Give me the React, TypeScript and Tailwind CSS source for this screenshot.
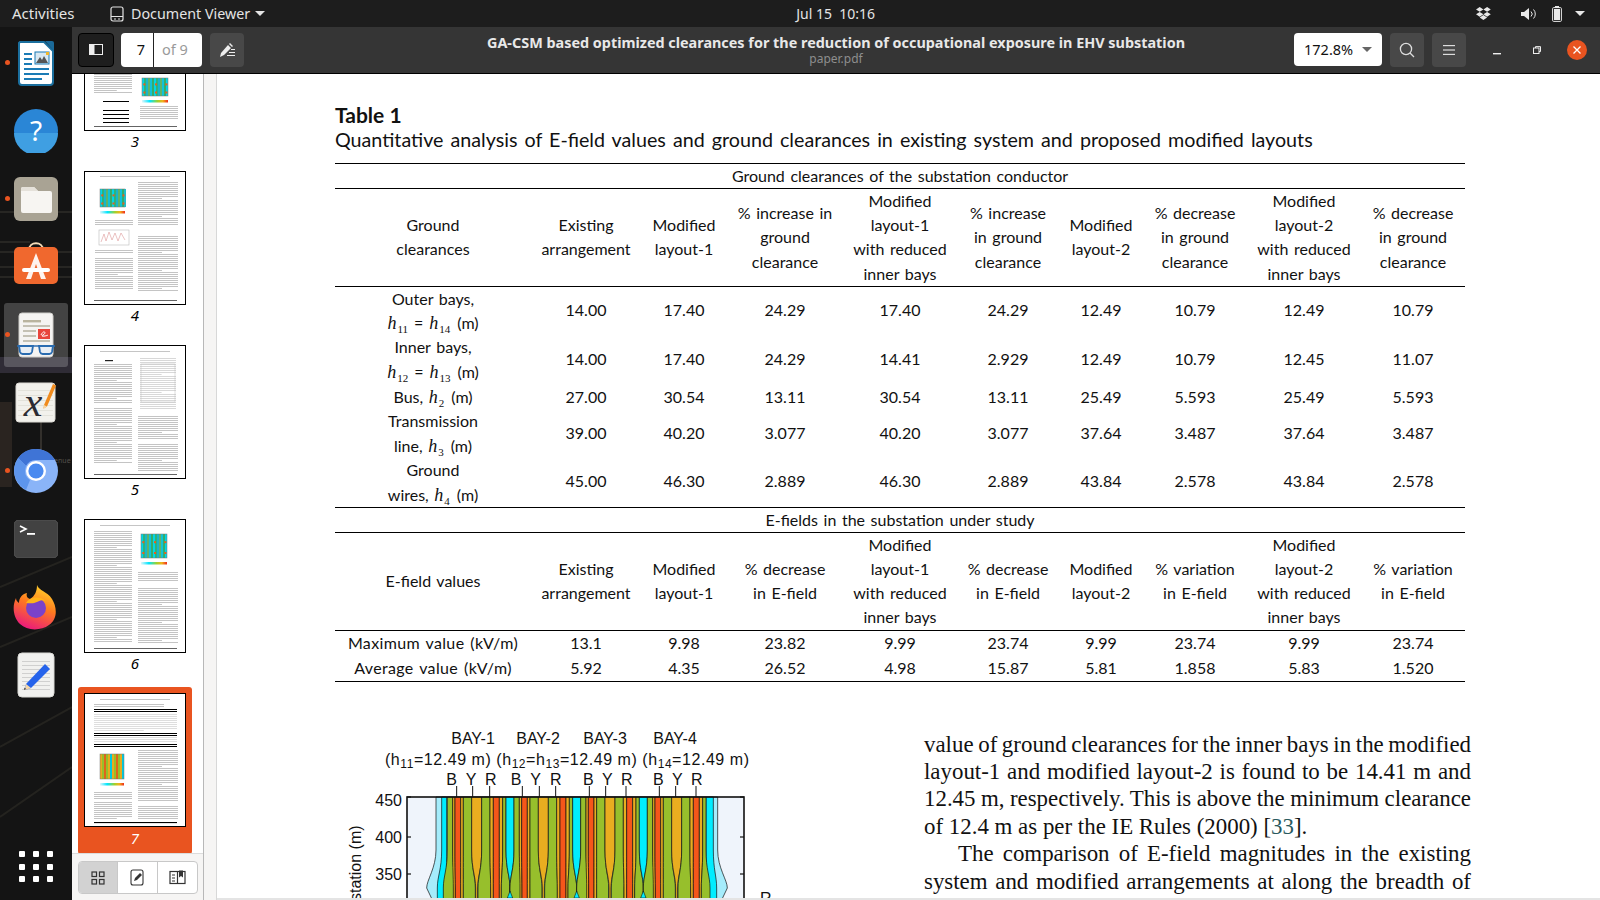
import React from "react";

const SANS = "font-['Noto_Sans','Open_Sans',sans-serif]";

/* ---------- Dock icons ---------- */
const WriterIcon = () => (
  <svg width="38" height="46" viewBox="0 0 38 46">
    <path d="M3 2h24l9 9v31a3 3 0 0 1-3 3H5a3 3 0 0 1-3-3V3z" fill="#fff" stroke="#1b6f9e" strokeWidth="2" />
    <path d="M28 1h7a2 2 0 0 1 2 2v8z" fill="#1b6a99" />
    <rect x="7" y="13" width="8" height="2" fill="#1b7bb5" />
    <rect x="7" y="18" width="8" height="2" fill="#1b7bb5" />
    <rect x="7" y="23" width="8" height="2" fill="#1b7bb5" />
    <rect x="18" y="12" width="14" height="12" fill="#d8e8f2" stroke="#1b7bb5" strokeWidth="1" />
    <path d="M19 23l4-6 2 3 2-4 4 7z" fill="#555" />
    <rect x="29" y="12" width="3" height="3" fill="#f1b72b" />
    <rect x="7" y="28" width="25" height="2" fill="#1b7bb5" />
    <rect x="7" y="33" width="25" height="2" fill="#1b7bb5" />
    <rect x="7" y="38" width="18" height="2" fill="#1b7bb5" />
  </svg>
);
const HelpIcon = () => (
  <svg width="44" height="44" viewBox="0 0 44 44">
    <circle cx="22" cy="22" r="22" fill="#2a86d6" />
    <path d="M0 24h44a22 22 0 0 1-44 0z" fill="#3f9fe2" />
    <text x="22" y="32" textAnchor="middle" fontSize="28" fill="#fff" fontFamily="Noto Sans, sans-serif">?</text>
  </svg>
);
const FilesIcon = () => (
  <svg width="44" height="44" viewBox="0 0 44 44">
    <rect width="44" height="44" rx="6" fill="#a9a394" />
    <path d="M7 12a2 2 0 0 1 2-2h11l4 4h12a2 2 0 0 1 2 2v18a2 2 0 0 1-2 2H9a2 2 0 0 1-2-2z" fill="#f7f5f2" />
    <path d="M7 12a2 2 0 0 1 2-2h11l4 4H7z" fill="#e5e1da" />
  </svg>
);
const StoreIcon = () => (
  <svg className="-translate-y-[3px]" width="44" height="44" viewBox="0 0 44 44">
    <path d="M15 8c0-9 14-9 14 0" fill="none" stroke="#f6dcb8" strokeWidth="2" />
    <rect y="5" width="44" height="37" rx="5" fill="#f0682e" />
    <path d="M22 11l-10 26h5l5-15 5 15h5z" fill="#fff" opacity="0.92" />
    <rect x="8" y="26" width="28" height="4" rx="2" fill="#fff" />
  </svg>
);
const EvinceIcon = () => (
  <svg width="40" height="46" viewBox="0 0 40 46">
    <rect x="3" y="1" width="34" height="44" rx="3" fill="#f5f4f2" stroke="#d0cfcb" />
    <rect x="7" y="8" width="18" height="2.4" fill="#b9b49f" />
    <rect x="7" y="13" width="27" height="2" fill="#c4c1b4" />
    <rect x="7" y="18" width="13" height="2" fill="#c4c1b4" />
    <rect x="7" y="23" width="13" height="2" fill="#c4c1b4" />
    <rect x="7" y="28" width="27" height="2" fill="#c4c1b4" />
    <rect x="22" y="17" width="12" height="10" fill="#e8453c" />
    <path d="M25 23c3-6 6-2 2 0s4 1 5 0" stroke="#fff" fill="none" strokeWidth="1" />
    <path d="M1 34h38" stroke="#2a6cb0" strokeWidth="1.6" />
    <path d="M3 34h14l-1 6a3 3 0 0 1-3 2H7a3 3 0 0 1-3-2z" fill="#e9eff5" stroke="#2a6cb0" strokeWidth="1.8" />
    <path d="M23 34h14l-1 6a3 3 0 0 1-3 2h-6a3 3 0 0 1-3-2z" fill="#e9eff5" stroke="#2a6cb0" strokeWidth="1.8" />
  </svg>
);
const XedIcon = () => (
  <svg className="overflow-visible" width="42" height="42" viewBox="0 0 42 42">
    <rect x="1" y="1" width="39" height="39" rx="3" fill="#f2f1ec" stroke="#dcdad4" />
    {[8, 13, 18, 23, 28, 33].map((y) => (
      <rect key={y} x="3" y={y} width="35" height="0.7" fill="#dddbd3" />
    ))}
    <text x="18" y="34" textAnchor="middle" fontSize="42" fontStyle="italic" fill="#2b2b33" fontFamily="Liberation Serif, serif">x</text>
    <path d="M29 23L38 2l3 1.5-9 21-3.5 2z" fill="#f08b1d" />
    <path d="M29 23l-.5 4 3.5-2.5z" fill="#f5d6a5" />
  </svg>
);
const ChromiumIcon = () => (
  <svg width="44" height="44" viewBox="0 0 44 44">
    <circle cx="22" cy="22" r="22" fill="#8ab4f8" />
    <path d="M22 0a22 22 0 0 1 19 11H22a11 11 0 0 0-10 6L4 9A22 22 0 0 1 22 0z" fill="#3f74d6" />
    <path d="M4 9l8 8-1 4a11 11 0 0 0 5 10L12 41A22 22 0 0 1 4 9z" fill="#5d95ec" />
    <circle cx="22" cy="22" r="10" fill="#fff" />
    <circle cx="22" cy="22" r="7.6" fill="#4a8af0" />
  </svg>
);
const TerminalIcon = () => (
  <svg width="44" height="38" viewBox="0 0 44 38">
    <rect width="44" height="38" rx="5" fill="#424242" stroke="#555" />
    <path d="M6 6l6 3-6 3" fill="none" stroke="#fff" strokeWidth="1.6" />
    <rect x="13" y="13" width="8" height="1.8" fill="#fff" />
  </svg>
);
const FirefoxIcon = () => (
  <svg width="46" height="48" viewBox="0 0 46 48">
    <defs>
      <linearGradient id="ff" x1="0.7" y1="0" x2="0.3" y2="1">
        <stop offset="0" stopColor="#ffd42a" />
        <stop offset="0.45" stopColor="#ff7a1f" />
        <stop offset="1" stopColor="#e9167f" />
      </linearGradient>
    </defs>
    <path d="M24 2c2 6 10 6 15 14 5 8 6 20-3 26-8 6-22 6-29-1C0 34-1 23 3 15c0 3 2 4 3 5 0-5 3-9 8-10-1 3 0 5 3 6 5-3 7-8 7-14z" fill="url(#ff)" />
    <circle cx="23" cy="25" r="10" fill="#7b42c9" />
    <path d="M13 20c3-6 13-8 20-2-5-2-7 0-9 1-4 2-7 1-11 1z" fill="#ffb31a" />
  </svg>
);
const NoteIcon = () => (
  <svg width="38" height="46" viewBox="0 0 38 46">
    <rect x="1" y="1" width="36" height="44" rx="4" fill="#f1f1ef" stroke="#dadad6" />
    {[9, 13, 17, 21, 25, 29, 33, 37].map((y) => (
      <rect key={y} x="5" y={y} width="28" height="0.8" fill="#c9c9c7" />
    ))}
    <path d="M9 32L28 12l5 5-19 19-6 2z" fill="#2563eb" />
    <path d="M9 32l5 4-6 2z" fill="#f5d7a8" />
    <path d="M7.5 35.5l1.5 1.5-2 1z" fill="#333" />
  </svg>
);

const DockItem = ({ dot, active, children }: { dot?: boolean; active?: boolean; children: React.ReactNode }) => (
  <div className="relative flex h-[68px] w-[72px] items-center justify-center">
    {active && <div className="absolute left-[4px] top-[2px] h-[64px] w-[64px] rounded-[3px] bg-white/20" />}
    {dot && <div className="absolute left-[5px] top-[31px] h-[5px] w-[5px] rounded-full bg-[#e95420]" />}
    <div className="relative flex">{children}</div>
  </div>
);

const Dock = () => (
  <div className="relative flex w-[72px] flex-col overflow-hidden bg-[#141414] pt-[2px]">
    <svg className="absolute left-0 top-0" width="72" height="873" viewBox="0 0 72 873">
      <path d="M0 185h72M0 225h72M0 240h72M0 250h72M0 215h30" stroke="#2e2c28" strokeWidth="1.5" />
      <rect x="0" y="330" width="72" height="16" fill="#4a4458" opacity="0.5" />
      <rect x="0" y="375" width="12" height="85" fill="#2a2420" />
      <rect x="40" y="360" width="2" height="90" fill="#33302c" />
      <text x="46" y="436" fontSize="7" fill="#55524c" fontFamily="Noto Sans, sans-serif">Avenue</text>
      <path d="M0 560L72 530M0 620L72 590M0 720L72 680M0 790L72 740" stroke="#24231f" strokeWidth="2" />
    </svg>
    <DockItem dot><WriterIcon /></DockItem>
    <DockItem><HelpIcon /></DockItem>
    <DockItem dot><FilesIcon /></DockItem>
    <DockItem><StoreIcon /></DockItem>
    <DockItem dot active><EvinceIcon /></DockItem>
    <DockItem><XedIcon /></DockItem>
    <DockItem dot><ChromiumIcon /></DockItem>
    <DockItem><TerminalIcon /></DockItem>
    <DockItem><FirefoxIcon /></DockItem>
    <DockItem><NoteIcon /></DockItem>
    <div className="relative mt-auto mb-[18px] grid w-[72px] grid-cols-3 justify-items-center gap-y-[6.5px] px-[15px]">
      {Array.from({ length: 9 }).map((_, i) => (
        <div key={i} className="h-[6px] w-[6px] rounded-[1px] bg-white" />
      ))}
    </div>
  </div>
);

/* ---------- Thumbnails ---------- */
const Lines = ({ x, y, w, n, gap = 2, c = "#666" }: { x: number; y: number; w: number; n: number; gap?: number; c?: string }) => (
  <g fill={c} opacity="0.42">
    {Array.from({ length: n }).map((_, i) => (
      <rect key={i} x={x} y={y + i * gap} width={i % 9 === 8 ? w * 0.6 : w} height="0.9" />
    ))}
  </g>
);
const Heat = ({ x, y, w, h, mixed }: { x: number; y: number; w: number; h: number; mixed?: boolean }) => {
  const colors = mixed ? ["#e8ab1e", "#96bf2b", "#e0641c", "#96bf2b", "#e8ab1e", "#00c9e0"] : ["#00d5e8", "#2cb37d", "#19b5c9", "#5db36a", "#10c2d8", "#34ad6a"];
  const n = Math.round(w / 2);
  return (
    <g>
      {Array.from({ length: n }).map((_, i) => (
        <rect key={i} x={x + i * 2} y={y} width="2" height={h} fill={colors[i % colors.length]} />
      ))}
      {!mixed && [y + h * 0.3, y + h * 0.75].map((yy, k) =>
        [0.05, 0.5, 0.9].map((f) => <rect key={k + "" + f} x={x + w * f} y={yy} width="2" height="2" fill="#ee5a1a" />)
      )}
      <rect x={x} y={y} width={w} height={h} fill="none" stroke="#777" strokeWidth="0.5" />
      <defs>
        <linearGradient id="cb">
          <stop offset="0" stopColor="#dff7fb" />
          <stop offset="0.3" stopColor="#00e5ff" />
          <stop offset="0.6" stopColor="#9fd12b" />
          <stop offset="0.8" stopColor="#f2b21c" />
          <stop offset="1" stopColor="#ef2b1c" />
        </linearGradient>
      </defs>
      <rect x={x} y={y + h + 4} width={w} height="2.5" fill="url(#cb)" />
    </g>
  );
};

const pageFrame = (children: React.ReactNode) => (
  <svg className="block h-[134px] w-[102px] shrink-0 border border-black bg-white" viewBox="0 0 100 132" preserveAspectRatio="none">
    {children}
  </svg>
);

const P3 = () => pageFrame(
  <>
    <Lines x={9} y={4} w={38} n={46} />
    <Lines x={52} y={4} w={40} n={36} />
    <Heat x={57} y={80} w={26} h={18} />
    <Lines x={55} y={108} w={38} n={7} />
    {[103, 112, 116, 120, 124].map((y) => <rect key={y} x={18} y={y} width="26" height="1" fill="#000" />)}
    <rect x={9} y={128} width="83" height="0.7" fill="#222" />
  </>
);
const P4 = () => pageFrame(
  <>
    <Lines x={15} y={4} w={70} n={1} />
    <Heat x={15} y={17} w={25} h={18} />
    <Lines x={10} y={48} w={38} n={3} />
    <rect x={14} y={58} width="30" height="15" fill="none" stroke="#bbb" strokeWidth="0.6" />
    <path d="M16 70l3-8 2 7 3-9 3 8 3-7 3 8 3-8 4 7" fill="none" stroke="#d99" strokeWidth="0.6" />
    <Lines x={10} y={78} w={38} n={2} />
    <Lines x={10} y={86} w={38} n={16} />
    <Lines x={53} y={10} w={40} n={22} />
    <Lines x={53} y={64} w={40} n={28} />
    <rect x={9} y={128} width="83" height="0.7" fill="#222" />
  </>
);
const P5 = () => pageFrame(
  <>
    <Lines x={15} y={5} w={70} n={1} />
    <rect x={20} y={14} width="8" height="1.2" fill="#222" />
    <Lines x={9} y={18} w={38} n={20} />
    <Lines x={9} y={62} w={38} n={28} />
    <Lines x={55} y={12} w={36} n={26} c="#999" />
    <rect x={56} y={18} width="34" height="38" fill="none" stroke="#bbb" strokeWidth="0.5" />
    <Lines x={53} y={70} w={40} n={12} />
    <Lines x={53} y={98} w={40} n={14} />
    <rect x={9} y={128} width="83" height="0.7" fill="#222" />
  </>
);
const P6 = () => pageFrame(
  <>
    <Lines x={15} y={5} w={70} n={1} />
    <Lines x={9} y={11} w={38} n={56} />
    <Heat x={56} y={14} w={26} h={24} />
    <Lines x={53} y={52} w={40} n={5} />
    <Lines x={53} y={68} w={40} n={28} />
    <rect x={9} y={128} width="83" height="0.7" fill="#222" />
  </>
);
const P7 = () => pageFrame(
  <>
    <Lines x={15} y={5} w={70} n={1} />
    <Lines x={9} y={10} w={70} n={2} />
    {[15, 17, 39, 41, 50, 52].map((y) => <rect key={y} x={9} y={y} width="83" height="1" fill="#000" />)}
    <Lines x={9} y={20} w={83} n={9} c="#aaa" />
    <Lines x={9} y={43} w={83} n={3} c="#aaa" />
    <Heat x={15} y={60} w={24} h={25} mixed />
    <Lines x={9} y={98} w={38} n={4} />
    <Lines x={9} y={108} w={38} n={9} />
    <Lines x={53} y={56} w={40} n={26} />
    <Lines x={53} y={112} w={40} n={7} />
    <rect x={9} y={128} width="83" height="1.1" fill="#000" />
  </>
);

const ThumbLabel = ({ n, white }: { n: number; white?: boolean }) => (
  <div className={`mt-[3px] flex h-[14px] items-center justify-center text-[15px] italic ${SANS} ${white ? "text-white" : "text-black"}`}>{n}</div>
);

const Thumbs = () => (
  <div className="flex-1 overflow-hidden bg-white">
    <div className="-mt-[77px] ml-[6px] flex w-[114px] flex-col items-center">
      <div className="flex h-[174px] w-[102px] flex-col"><P3 /><ThumbLabel n={3} /></div>
      <div className="flex h-[174px] w-[102px] flex-col"><P4 /><ThumbLabel n={4} /></div>
      <div className="flex h-[174px] w-[102px] flex-col"><P5 /><ThumbLabel n={5} /></div>
      <div className="flex h-[168px] w-[102px] flex-col"><P6 /><ThumbLabel n={6} /></div>
      <div className="flex h-[167px] w-[114px] flex-col items-center rounded-[3px] bg-[#e95420] pt-[6px]">
        <P7 />
        <div className="mt-[1px]"><ThumbLabel n={7} white /></div>
      </div>
    </div>
  </div>
);

const SideTabs = () => (
  <div className="flex h-[47px] items-start border-t border-[#dcdcdc] bg-[#f6f5f4] pl-[6px] pt-[7px]">
    <div className="flex h-[33px] w-[120px] overflow-hidden rounded-[4px] border border-[#c8c8c8] bg-white">
      <div className="flex w-[40px] items-center justify-center border-r border-[#c8c8c8] bg-[#d2d2d2]">
        <svg width="14" height="14" viewBox="0 0 14 14" fill="none" stroke="#333" strokeWidth="1.2">
          <rect x="1" y="1" width="4.5" height="4.5" /><rect x="8.5" y="1" width="4.5" height="4.5" />
          <rect x="1" y="8.5" width="4.5" height="4.5" /><rect x="8.5" y="8.5" width="4.5" height="4.5" />
        </svg>
      </div>
      <div className="flex w-[40px] items-center justify-center border-r border-[#c8c8c8]">
        <svg width="15" height="17" viewBox="0 0 15 17">
          <rect x="1" y="1" width="12" height="15" rx="2" fill="none" stroke="#333" strokeWidth="1.1" />
          <path d="M4 12l1-3 5-5 2 2-5 5z" fill="#333" />
        </svg>
      </div>
      <div className="flex w-[40px] items-center justify-center">
        <svg width="17" height="15" viewBox="0 0 17 15" fill="none" stroke="#333" strokeWidth="1.2">
          <rect x="1" y="1.5" width="15" height="12" />
          <path d="M8.5 1.5v12M3 5h3M3 8h3M3 11h3" />
          <path d="M10 .5h4v7l-2-1.5-2 1.5z" fill="#333" stroke="none" />
        </svg>
      </div>
    </div>
  </div>
);

/* ---------- Table ---------- */
const H = ({ n }: { n: string | number }) => (
  <span className="whitespace-nowrap leading-[0]">
    <i className="font-['Liberation_Serif',serif] text-[18px] leading-[0]">h</i>
    <span className="relative top-[4px] ml-[1px] font-['Liberation_Serif',serif] text-[11px] leading-[0]">{n}</span>
  </span>
);
const Eq = () => <span className="mx-[6px]">=</span>;
const Unit = () => <span className="ml-[7px]">(m)</span>;
const br = (...parts: React.ReactNode[]) =>
  parts.map((p, i) => (
    <React.Fragment key={i}>
      {i > 0 && <br />}
      {p}
    </React.Fragment>
  ));

const head1: React.ReactNode[] = [
  br("Ground", "clearances"),
  br("Existing", "arrangement"),
  br("Modified", "layout-1"),
  br("% increase in", "ground", "clearance"),
  br("Modified", "layout-1", "with reduced", "inner bays"),
  br("% increase", "in ground", "clearance"),
  br("Modified", "layout-2"),
  br("% decrease", "in ground", "clearance"),
  br("Modified", "layout-2", "with reduced", "inner bays"),
  br("% decrease", "in ground", "clearance"),
];
const head2: React.ReactNode[] = [
  "E-field values",
  br("Existing", "arrangement"),
  br("Modified", "layout-1"),
  br("% decrease", "in E-field"),
  br("Modified", "layout-1", "with reduced", "inner bays"),
  br("% decrease", "in E-field"),
  br("Modified", "layout-2"),
  br("% variation", "in E-field"),
  br("Modified", "layout-2", "with reduced", "inner bays"),
  br("% variation", "in E-field"),
];
const rows1: { h: string; two: boolean; c: React.ReactNode[] }[] = [
  { h: "h-[49px]", two: true, c: [br("Outer bays,", <><H n={11} /><Eq /><H n={14} /><Unit /></>), "14.00", "17.40", "24.29", "17.40", "24.29", "12.49", "10.79", "12.49", "10.79"] },
  { h: "h-[49px]", two: true, c: [br("Inner bays,", <><H n={12} /><Eq /><H n={13} /><Unit /></>), "14.00", "17.40", "24.29", "14.41", "2.929", "12.49", "10.79", "12.45", "11.07"] },
  { h: "h-[25px]", two: false, c: [<>Bus, <H n={2} /><Unit /></>, "27.00", "30.54", "13.11", "30.54", "13.11", "25.49", "5.593", "25.49", "5.593"] },
  { h: "h-[49px]", two: true, c: [br("Transmission", <>line, <H n={3} /><Unit /></>), "39.00", "40.20", "3.077", "40.20", "3.077", "37.64", "3.487", "37.64", "3.487"] },
  { h: "h-[49px]", two: true, c: [br("Ground", <>wires, <H n={4} /><Unit /></>), "45.00", "46.30", "2.889", "46.30", "2.889", "43.84", "2.578", "43.84", "2.578"] },
];
const rows2: { h: string; c: React.ReactNode[] }[] = [
  { h: "h-[25px]", c: [<span className="tracking-[0.35px]">Maximum value (kV/m)</span>, "13.1", "9.98", "23.82", "9.99", "23.74", "9.99", "23.74", "9.99", "23.74"] },
  { h: "h-[26px]", c: [<span className="tracking-[0.35px]">Average value (kV/m)</span>, "5.92", "4.35", "26.52", "4.98", "15.87", "5.81", "1.858", "5.83", "1.520"] },
];
const widths = ["w-[196px]", "w-[110px]", "w-[86px]", "w-[116px]", "w-[114px]", "w-[102px]", "w-[84px]", "w-[104px]", "w-[114px]", "w-[104px]"];

const Row = ({ cells, cls, two }: { cells: React.ReactNode[]; cls: string; two?: boolean }) => (
  <tr className={cls}>
    {cells.map((c, i) => (
      <td key={i} className={two ? (i === 0 ? "p-0 text-center align-top" : "p-0 pb-[2px] text-center align-middle") : "p-0 text-center align-middle"}>{c}</td>
    ))}
  </tr>
);

const DataTable = () => (
  <table className="w-[1130px] table-fixed border-collapse border-y border-black text-[16px] leading-[24.2px] text-[#111] [word-spacing:1.5px]">
    <colgroup>{widths.map((w, i) => <col key={i} className={w} />)}</colgroup>
    <tbody>
      <tr className="h-[24px] border-b border-black"><td colSpan={10} className="p-0 pb-[1px] text-center leading-[23px]">Ground clearances of the substation conductor</td></tr>
      <Row cells={head1} cls="h-[97px] border-b border-black" />
      {rows1.map((r, i) => <Row key={i} cells={r.c} cls={r.h} two={r.two} />)}
      <tr className="h-[24px] border-y border-black"><td colSpan={10} className="p-0 pb-[1px] text-center leading-[23px]">E-fields in the substation under study</td></tr>
      <Row cells={head2} cls="h-[97px] border-b border-black" />
      {rows2.map((r, i) => <Row key={i} cells={r.c} cls={r.h} />)}
    </tbody>
  </table>
);

/* ---------- Contour figure ---------- */
const RED = "#f5561a", AMB = "#e9ad20", GRN = "#97bf2c", CYA = "#00edff", LCY = "#a5ecfb";
const X = (z: number) => 330 + z / 3;
// l, r at the top, l2, r2 where the field pinches
const pattern: [number, number, number, number, string][] = [
  [-12, 12, 0, 0, CYA],
  [12, 28, 0, 36, GRN],
  [28, 35, 30, 36, AMB],
  [35, 52, 36, 52, RED],
  [52, 60, 52, 60, AMB],
  [60, 85, 60, 96, GRN],
  [85, 115, 97, 103, AMB],
  [115, 140, 104, 142, GRN],
  [140, 150, 142, 150, AMB],
  [150, 168, 150, 168, RED],
  [168, 178, 168, 174, AMB],
  [178, 188, 174, 200, GRN],
];
const stripe = (l: number, r: number, l2: number, r2: number) =>
  `M${X(l)} 797 L${X(l)} 850 C${X(l)} 870 ${X(l2)} 876 ${X(l2)} 888 L${X(l2)} 902 L${X(r2)} 902 L${X(r2)} 888 C${X(r2)} 876 ${X(r)} 870 ${X(r)} 850 L${X(r)} 797 Z`;

const Figure = () => {
  const cs = [340, 540, 740, 940, 1140];
  const bays = [["BAY-1", 473], ["BAY-2", 538], ["BAY-3", 605], ["BAY-4", 675]] as const;
  const phases = [[380, 365, "B"], [428, 423, "Y"], [479, 482, "R"], [577, 558, "B"], [628, 617, "Y"], [677, 677, "R"], [778, 775, "B"], [827, 832, "Y"], [888, 890, "R"], [988, 985, "B"], [1037, 1042, "Y"], [1098, 1100, "R"]] as const;
  const font = "Liberation Sans, Arial, sans-serif";
  return (
    <svg className="block shrink-0" width="480" height="190" viewBox="335 720 480 190" fontFamily={font}>
      <rect x="407" y="797" width="337" height="110" fill="#eff4fb" />
      <path d={`M${X(318)} 797 L${X(318)} 850 C${X(318)} 868 ${X(290)} 880 ${X(290)} 888 L${X(310)} 902 L${X(1172)} 902 L${X(1192)} 888 C${X(1192)} 880 ${X(1163)} 868 ${X(1163)} 850 L${X(1163)} 797 Z`} fill={LCY} stroke="#111" strokeWidth="0.7" />
      <path d={stripe(335, 350, 322, 352)} fill={CYA} stroke="#111" strokeWidth="0.7" />
      <path d={stripe(1128, 1150, 1128, 1160)} fill={CYA} stroke="#111" strokeWidth="0.7" />
      {cs.slice(0, 4).map((c, bi) =>
        pattern.map(([l, r, l2, r2, col], i) =>
          bi === 0 && i === 0 ? null : <path key={bi + "-" + i} d={stripe(c + l, c + r, c + l2, c + r2)} fill={col} stroke="#111" strokeWidth="0.7" />
        )
      )}
      {[540, 740, 940].map((c) => (
        <path key={c} d={`M${X(c - 8)} 898 L${X(c)} 891 L${X(c + 8)} 898 Z`} fill={CYA} stroke="#111" strokeWidth="0.6" />
      ))}
      <rect x="407" y="797" width="337" height="110" fill="none" stroke="#111" strokeWidth="1.6" />
      {[797, 837, 874].map((y) => (
        <g key={y} stroke="#111" strokeWidth="1.2">
          <line x1="407" y1={y} x2="411" y2={y} />
          <line x1="744" y1={y} x2="740" y2={y} />
        </g>
      ))}
      {phases.map(([t, z, p]) => (
        <g key={t}>
          <line x1={X(t)} y1="786" x2={X(t)} y2="797" stroke="#111" strokeWidth="1" />
          <text x={X(z)} y="785" textAnchor="middle" fontSize="16" fill="#111">{p}</text>
        </g>
      ))}
      {bays.map(([t, x]) => (
        <text key={t} x={x} y="744" textAnchor="middle" fontSize="16" fill="#111">{t}</text>
      ))}
      <text x="385" y="765" fontSize="16" fill="#111" textLength="364">
        (h<tspan fontSize="12" dy="3">11</tspan><tspan dy="-3">=12.49 m) (h</tspan><tspan fontSize="12" dy="3">12</tspan><tspan dy="-3">=h</tspan><tspan fontSize="12" dy="3">13</tspan><tspan dy="-3">=12.49 m) (h</tspan><tspan fontSize="12" dy="3">14</tspan><tspan dy="-3">=12.49 m)</tspan>
      </text>
      {[[450, 805.5], [400, 843], [350, 880]].map(([t, y]) => (
        <text key={t} x="402" y={y} textAnchor="end" fontSize="16" fill="#111">{t}</text>
      ))}
      <text transform="translate(361 901) rotate(-90)" fontSize="16" fill="#111">station (m)</text>
      <text x="760" y="904" fontSize="16" fill="#111">R</text>
    </svg>
  );
};

/* ---------- Body text ---------- */
const J = ({ children, last, indent, cls = "" }: { children: React.ReactNode; last?: boolean; indent?: boolean; cls?: string }) => (
  <div className={`h-[27.4px] ${last ? "whitespace-nowrap" : "whitespace-normal text-justify [text-align-last:justify]"} ${indent ? "indent-[34px]" : ""} ${cls}`}>{children}</div>
);

const BodyText = () => (
  <div className="ml-[109px] mt-[11px] w-[547px] shrink-0 font-['Liberation_Serif',serif] text-[22.9px] leading-[27.4px] text-[#111]">
    <J cls="[word-spacing:-2px]">value of ground clearances for the inner bays in the modified</J>
    <J cls="[word-spacing:-2px]">layout-1 and modified layout-2 is found to be 14.41 m and</J>
    <J cls="[word-spacing:-2px]">12.45 m, respectively. This is above the minimum clearance</J>
    <J last>of 12.4 m as per the IE Rules (2000) [<span className="text-[#2a5a5e]">33</span>].</J>
    <J indent cls="[word-spacing:-2px]">The comparison of E-field magnitudes in the existing</J>
    <J cls="[word-spacing:-2px]">system and modified arrangements at along the breadth of</J>
  </div>
);

/* ---------- Chrome ---------- */
const HeadBtn = ({ children, cls = "" }: { children: React.ReactNode; cls?: string }) => (
  <div className={`flex h-[34px] w-[34px] items-center justify-center rounded-[4px] bg-[#484848] ${cls}`}>{children}</div>
);

const TopBar = () => (
  <div className={`flex h-[27px] items-center bg-[#1d1d1d] text-[14.5px] text-[#e4e4e4] ${SANS}`}>
    <span className="ml-[12px] w-[98px] text-[15px]">Activities</span>
    <svg width="14" height="16" viewBox="0 0 14 16" fill="none" stroke="#e4e4e4" strokeWidth="1.2">
      <rect x="1" y="1" width="12" height="14" rx="2" />
      <path d="M1 10.5h12M4 13h2M8 13h2" />
    </svg>
    <span className="ml-[7px] text-[14.3px]">Document Viewer</span>
    <svg className="ml-[5px]" width="10" height="5" viewBox="0 0 10 5"><path d="M0 0h10L5 5z" fill="#e4e4e4" /></svg>
    <span className="ml-[531px] text-[14px]">Jul 15&nbsp; 10:16</span>
    <div className="ml-auto flex items-center">
      <svg width="15" height="13" viewBox="0 0 15 13" fill="#e8e8e8">
        <path d="M3.7 0L7.4 2.4 3.7 4.8 0 2.4zM11.1 0l3.7 2.4-3.7 2.4-3.7-2.4zM3.7 4.9l3.7 2.4-3.7 2.4L0 7.3zM11.1 4.9l3.7 2.4-3.7 2.4-3.7-2.4zM7.4 8l3.7 2.4L7.4 13l-3.7-2.6z" />
      </svg>
      <svg className="ml-[30px]" width="16" height="14" viewBox="0 0 16 14" fill="none">
        <path d="M0 5h3l5-4v12l-5-4H0z" fill="#e8e8e8" />
        <path d="M10 4.5a3.5 3.5 0 0 1 0 5M12.5 2.5a6.5 6.5 0 0 1 0 9" stroke="#e8e8e8" strokeWidth="1" />
      </svg>
      <svg className="ml-[15px]" width="10" height="16" viewBox="0 0 10 16">
        <rect x="3" y="0" width="4" height="2" fill="#e8e8e8" />
        <rect x="0.6" y="1.6" width="8.8" height="13.8" rx="1" fill="none" stroke="#e8e8e8" strokeWidth="1" />
        <rect x="2" y="3" width="6" height="11" fill="#e8e8e8" />
      </svg>
      <svg className="ml-[13px] mr-[15px]" width="10" height="5" viewBox="0 0 10 5"><path d="M0 0h10L5 5z" fill="#e8e8e8" /></svg>
    </div>
  </div>
);

const HeaderBar = () => (
  <div className={`flex h-[47px] shrink-0 items-center border-b border-black bg-[#353535] pb-[1px] pl-[6px] ${SANS}`}>
    <div className="flex h-[34px] w-[36px] items-center justify-center rounded-[4px] border border-black bg-[#1e1e1e]">
      <svg width="14" height="11" viewBox="0 0 14 11">
        <rect x="0.5" y="0.5" width="13" height="10" fill="none" stroke="#eee" />
        <rect x="0.5" y="0.5" width="5" height="10" fill="#eee" />
      </svg>
    </div>
    <div className="ml-[7px] flex h-[34px] w-[81px] items-center overflow-hidden rounded-[4px] bg-white text-[14.5px]">
      <div className="flex h-full w-[33px] items-center justify-end border-r border-[#222] pr-[8px] text-[#111]">7</div>
      <div className="pl-[8px] text-[#9a9a9a]">of 9</div>
    </div>
    <HeadBtn cls="ml-[8px]">
      <svg width="15" height="14" viewBox="0 0 15 14" fill="#eee">
        <path d="M0 14l1-4 7-8 3 3-7 7zM9 1l1-1 3 3-1 1z" />
        <path d="M7 13h8v-1H7zM9 10h6V9H9zM11 7h4V6h-4z" />
      </svg>
    </HeadBtn>
    <div className="ml-[10px] flex w-[1040px] flex-col items-center justify-center pl-[124px]">
      <div className="whitespace-nowrap text-[14.4px] font-bold leading-[18px] text-[#e8e8e8]">GA-CSM based optimized clearances for the reduction of occupational exposure in EHV substation</div>
      <div className="text-[12px] leading-[13px] text-[#8e8e8e]">paper.pdf</div>
    </div>
    <div className="ml-auto flex items-center">
      <div className="flex h-[33px] w-[88px] items-center rounded-[4px] bg-white pl-[10px] text-[14.5px] text-[#111]">
        172.8%
        <svg className="ml-[9px]" width="10" height="5" viewBox="0 0 10 5"><path d="M0 0h10L5 5z" fill="#666" /></svg>
      </div>
      <HeadBtn cls="ml-[8px]">
        <svg width="16" height="16" viewBox="0 0 16 16" fill="none" stroke="#ddd" strokeWidth="1.3">
          <circle cx="7" cy="7" r="5.6" /><path d="M11 11l4 4" />
        </svg>
      </HeadBtn>
      <HeadBtn cls="ml-[8px]">
        <svg width="12" height="10" viewBox="0 0 12 10" fill="#ddd">
          <rect width="12" height="1.2" /><rect y="4.4" width="12" height="1.2" /><rect y="8.8" width="12" height="1.2" />
        </svg>
      </HeadBtn>
      <svg className="ml-[27px]" width="8" height="10" viewBox="0 0 8 10"><rect y="8" width="8" height="1.4" fill="#eee" /></svg>
      <svg className="ml-[32px]" width="8" height="8" viewBox="0 0 8 8" fill="none" stroke="#eee">
        <rect x="0.5" y="2" width="5.5" height="5.5" /><path d="M2.5 2V0.6h5v5H6" />
      </svg>
      <div className="ml-[26px] mr-[13px] flex h-[20px] w-[20px] items-center justify-center rounded-full bg-[#e95420]">
        <svg width="8" height="8" viewBox="0 0 8 8" stroke="#fff" strokeWidth="1.3"><path d="M0.5 0.5l7 7M7.5 0.5l-7 7" /></svg>
      </div>
    </div>
  </div>
);

export default function App() {
  return (
    <div className="flex h-[900px] w-[1600px] flex-col overflow-hidden bg-black font-['Lato',sans-serif]">
      <TopBar />
      <div className="flex min-h-0 flex-1">
        <Dock />
        <div className="flex min-w-0 flex-1 flex-col">
          <HeaderBar />
          <div className="flex min-h-0 flex-1">
            <div className="flex w-[132px] flex-col border-r border-[#b8b8b8]"><Thumbs /><SideTabs /></div>
            <div className="w-[13px] border-r border-[#d8d8d8] bg-[#f6f5f4]" />
            <div className="flex min-w-0 flex-1 flex-col bg-white">
              <div className="min-h-0 flex-1 overflow-hidden pl-[118px] pt-[28px] text-[#111]">
                <div className="text-[21px] font-bold leading-[25px]">Table 1</div>
                <div className="whitespace-nowrap text-[19.7px] leading-[25px] [word-spacing:2px]">Quantitative analysis of E-field values and ground clearances in existing system and proposed modified layouts</div>
                <div className="mt-[11px]"><DataTable /></div>
                <div className="mt-[38px] flex items-start"><Figure /><BodyText /></div>
              </div>
              <div className="h-[2px] bg-[#e4e4e4]" />
            </div>
          </div>
        </div>
      </div>
    </div>
  );
}
